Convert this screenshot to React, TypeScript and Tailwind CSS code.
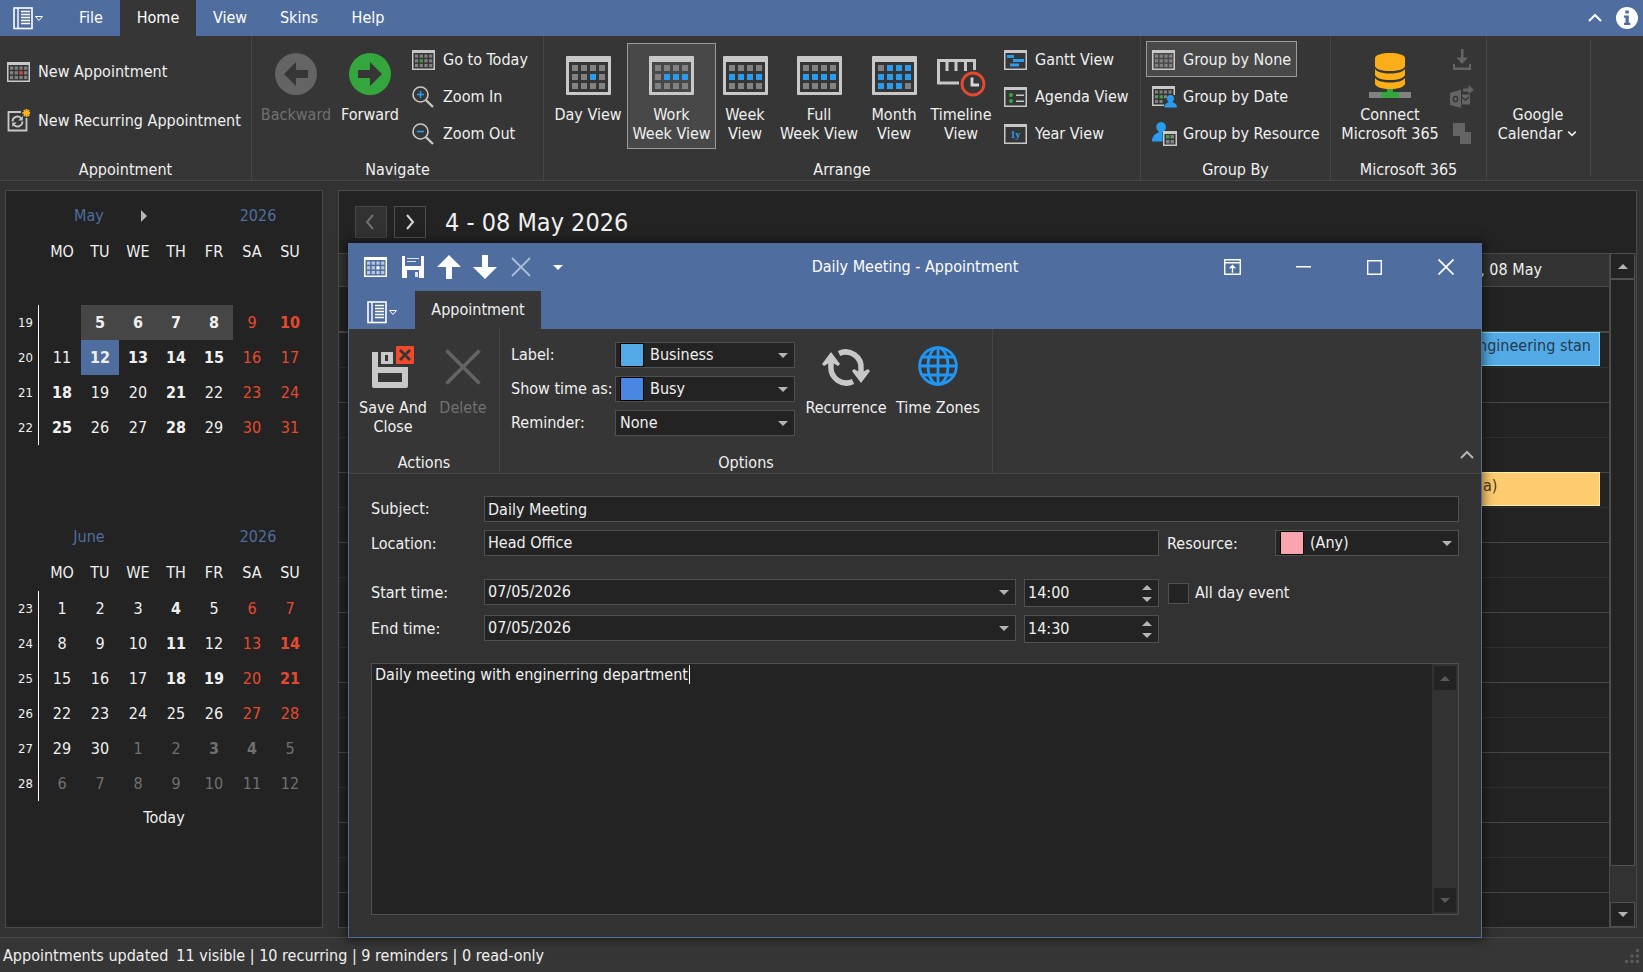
import type { ReactNode } from "react";
import clsx from "clsx";

/* ---------- icons ---------- */

type Cell = [number, number];

const WORK_WEEK: Cell[] = [[1, 1], [2, 1], [3, 1]];
const FULL_WEEK: Cell[] = [[0, 1], [1, 1], [2, 1], [3, 1]];
const MONTH: Cell[] = [
  [1, 0], [2, 0], [3, 0],
  [0, 1], [1, 1], [2, 1], [3, 1],
  [0, 2], [1, 2], [2, 2],
];

const CELLS: Cell[] = [0, 1, 2].flatMap((row) => [0, 1, 2, 3].map((col): Cell => [col, row]));

function isLit(lit: Cell[], [col, row]: Cell) {
  return lit.some(([c, r]) => c === col && r === row);
}

function BigCalendar({ lit }: { lit: Cell[] }) {
  return (
    <svg width="45" height="42" viewBox="0 -3 45 42">
      <path fill="#c8c8c8" fillRule="evenodd" d="M1 0h43a1 1 0 0 1 1 1v37a1 1 0 0 1-1 1H1a1 1 0 0 1-1-1V1a1 1 0 0 1 1-1zM3 6v30h39V6z" />
      {CELLS.map((cell) => (
        <rect
          key={cell.join()}
          x={6 + cell[0] * 9}
          y={9 + cell[1] * 9}
          width="6"
          height="6"
          fill={isLit(lit, cell) ? "#2a9cf0" : "#828282"}
        />
      ))}
    </svg>
  );
}

function SmallCalendar({ lit = [], color = "#c8c8c8", dot = "#828282", accent = "#33a33c" }: {
  lit?: Cell[];
  color?: string;
  dot?: string;
  accent?: string;
}) {
  return (
    <svg width="23" height="20" viewBox="0 0 23 20">
      <path fill={color} fillRule="evenodd" d="M0 0h23v20H0zM1.5 3v15.5h20V3z" />
      {CELLS.map((cell) => (
        <rect
          key={cell.join()}
          x={3 + cell[0] * 4.7}
          y={4.5 + cell[1] * 4.7}
          width="3.2"
          height="3.2"
          fill={isLit(lit, cell) ? accent : dot}
        />
      ))}
    </svg>
  );
}

function MenuIcon() {
  return (
    <svg width="31" height="23" viewBox="0 0 31 23" fill="none" stroke="#fff">
      <rect x="1" y="1" width="18" height="20.5" strokeWidth="1.6" />
      <path d="M5 1v20" strokeWidth="1.4" />
      <path d="M8 4.5h9M8 7.5h9M8 10.5h9M8 13.5h9M8 16.5h9" strokeWidth="1.5" />
      <path d="M22.5 9.5h7L26 13.5z" strokeWidth="1" />
    </svg>
  );
}

function RecurringIcon() {
  return (
    <svg width="23" height="23" viewBox="0 0 23 23" fill="none">
      <path d="M14 3H1.5v18.500h18V9" stroke="#c8c8c8" strokeWidth="1.8" />
      <path d="M5.500 12.500a5 5 0 0 1 8.500-3.500M15.500 12.500a5 5 0 0 1-8.500 3.500" stroke="#c8c8c8" strokeWidth="1.8" />
      <path d="M15.800 7v4.500h-4.500zM5.200 18v-4.500h4.500z" fill="#c8c8c8" />
      <path d="M19.500 0v8M15.500 4h8M16.700 1.200l5.600 5.600M22.300 1.200l-5.600 5.600" stroke="#fdb022" strokeWidth="1.8" />
    </svg>
  );
}

function CircleArrow({ back = false }: { back?: boolean }) {
  return (
    <svg width="42" height="42" viewBox="0 0 42 42">
      <circle cx="21" cy="21" r="21" fill={back ? "#646464" : "#35a63e"} />
      <path fill="#363636" d={back ? "M33 17H21V9L9 21l12 12v-8h12z" : "M9 17h12V9l12 12-12 12v-8H9z"} />
    </svg>
  );
}

function ZoomIcon({ plus = false }: { plus?: boolean }) {
  return (
    <svg width="22" height="22" viewBox="0 0 22 22" fill="none">
      <circle cx="8.500" cy="8.500" r="7.500" stroke="#c8c8c8" strokeWidth="1.6" />
      <path d="M13.800 14L21 21" stroke="#c8c8c8" strokeWidth="2.400" />
      <path d={plus ? "M5 8.500h7M8.500 5v7" : "M5 8.500h7"} stroke="#2a9cf0" strokeWidth="1.6" />
    </svg>
  );
}

function TimelineIcon() {
  return (
    <svg width="49" height="44" viewBox="0 -6 49 44" fill="none">
      <path d="M22 24H1.500V1.500h36V11M10 1.500V12M19 1.500V12M28.500 1.500V12" stroke="#c8c8c8" strokeWidth="3" />
      <ellipse cx="36" cy="25" rx="11" ry="11" fill="#363636" stroke="#e64a2e" strokeWidth="2.800" />
      <path d="M35 18.500V26h7" stroke="#d8d8d8" strokeWidth="2.800" />
    </svg>
  );
}

function GanttIcon() {
  return (
    <svg width="23" height="20" viewBox="0 0 23 20">
      <path fill="#c8c8c8" fillRule="evenodd" d="M0 0h23v20H0zM1.500 3v15.500h20V3z" />
      <path fill="#2a9cf0" d="M3 5h7v3H3zM9 9h11v3H9zM6 13.500h9v3H6z" />
    </svg>
  );
}

function AgendaIcon() {
  return (
    <svg width="23" height="20" viewBox="0 0 23 20">
      <path fill="#c8c8c8" fillRule="evenodd" d="M0 0h23v20H0zM1.500 3v15.500h20V3z" />
      <circle cx="7" cy="8" r="2" fill="#35a63e" />
      <circle cx="7" cy="14" r="2" fill="#35a63e" />
      <path fill="#c8c8c8" d="M12 7.500h8V9h-8zM12 13.500h8V15h-8z" />
    </svg>
  );
}

function YearIcon() {
  return (
    <svg width="23" height="20" viewBox="0 0 23 20">
      <path fill="#c8c8c8" fillRule="evenodd" d="M0 0h23v20H0zM1.500 3v15.500h20V3z" />
      <text x="11.500" y="14" textAnchor="middle" fontSize="10" fontWeight="bold" fontFamily="Liberation Serif, serif" fill="#2a9cf0">1y</text>
    </svg>
  );
}

function GroupDateIcon() {
  return (
    <svg width="25" height="22" viewBox="0 0 25 22">
      <path fill="#c8c8c8" d="M0 0h23v9h-1.500V3h-20v15.500H12V20H0z" />
      <path fill="#828282" d="M3 4.500h3v3H3zM7.500 4.500h3v3h-3zM12 4.500h3v3h-3zM16.500 4.500h3v3h-3zM3 9.200h3v3H3zM12 9.200h3v3h-3zM3 14h3v3H3zM7.500 14h3v3h-3z" />
      <path fill="#35a63e" d="M7.500 9.200h3.500v3.200H7.500z" />
      <path fill="#2a9cf0" d="M18.500 9a3.500 3.500 0 0 1 3.500 3.500c0 1.600-.8 3-1.700 3.800 2.300.6 4.700 1.700 4.700 5.200H12.500c0-3.500 2.200-4.600 4.300-5.200-.9-.8-1.800-2.200-1.800-3.800A3.500 3.500 0 0 1 18.500 9z" />
    </svg>
  );
}

function GroupResourceIcon() {
  return (
    <svg width="25" height="24" viewBox="0 0 25 24">
      <path fill="#2a9cf0" d="M9 0a5 5 0 0 1 5 5c0 1.700-.8 3.300-2 4.300V10h-1.500v9.500H0C0 14 3 12 6.500 10.500V9.300C5.300 8.300 4.300 6.700 4.300 5A4.800 4.800 0 0 1 9 0z" />
      <path fill="#c8c8c8" fillRule="evenodd" d="M11 9h14v15H11zM12.500 12v10.500h11V12z" />
      <path fill="#35a63e" d="M14 13h3.500v3.500H14z" />
      <path fill="#828282" d="M18.500 13H22v3.500h-3.500zM14 18h3.500v3.500H14zM18.500 18H22v3.500h-3.500z" />
    </svg>
  );
}

function DatabaseIcon() {
  return (
    <svg width="42" height="45" viewBox="0 0 42 45">
      <path fill="#828282" d="M0 39h12v6H0zM30 39h12v6H30z" />
      <path fill="#35a63e" d="M18 35h6v4h6v6H12v-6h6z" />
      <path fill="#fbae17" d="M6 5c0-3 7-5 15-5s15 2 15 5v8c0 3-7 5-15 5S6 16 6 13z" />
      <path fill="#fbae17" d="M6 16c2 3 8 4.500 15 4.500S34 19 36 16v6c-1 3-7 5-15 5S7 25 6 22z" />
      <path fill="#fbae17" d="M6 25c2 3 8 4.500 15 4.500S34 28 36 25v6c-1 3-7 5-15 5S7 34 6 31z" />
    </svg>
  );
}

function DownloadIcon() {
  return (
    <svg width="18" height="21" viewBox="0 0 18 21" fill="#646464">
      <path d="M8 0h2.500v8.500H15L9 15 3.500 8.500H8zM0 15h2v3.500h14V15h2v6H0z" />
    </svg>
  );
}

function OutlookIcon() {
  return (
    <svg width="24" height="23" viewBox="0 0 24 23">
      <path fill="#646464" d="M0 8l11-3.500V23L0 20zM12 9.500h8v10h-8z" />
      <path fill="none" stroke="#363636" strokeWidth="1.500" d="M11.500 12l4 3 3.500-3" />
      <ellipse cx="5.500" cy="14" rx="2.200" ry="2.600" fill="none" stroke="#363636" strokeWidth="1.500" />
      <path fill="#646464" d="M13 3.500h5.500V0L24 5l-5.500 4V6.500H13z" />
    </svg>
  );
}

function CopyIcon() {
  return (
    <svg width="18" height="21" viewBox="0 0 18 21" fill="#646464">
      <path d="M0 0h12v9h6v12H7v-8H0z" />
    </svg>
  );
}

function SaveCloseIcon() {
  return (
    <svg width="42" height="42" viewBox="0 0 42 42">
      <path fill="#c8c8c8" fillRule="evenodd" d="M0 6h6v15h30v19a2 2 0 0 1-2 2H2a2 2 0 0 1-2-2zM6 27v9h24v-9z" />
      <path fill="#c8c8c8" fillRule="evenodd" d="M9 6h12v12H9zM13 9v6h3V9z" />
      <rect x="24" width="18" height="18" rx="1" fill="#f0492b" />
      <path d="M28 4l10 10M38 4L28 14" stroke="#363636" strokeWidth="2.800" />
    </svg>
  );
}

function DeleteIcon() {
  return (
    <svg width="36" height="39" viewBox="0 -3 36 39">
      <path d="M1.500 1.500l33 33M34.500 1.500l-33 33" stroke="#646464" strokeWidth="3.600" />
    </svg>
  );
}

function RecurrenceIcon() {
  return (
    <svg width="48" height="40" viewBox="0 -3 48 40" fill="none">
      <path d="M9 11v6a15.500 15.500 0 0 0 22 15.500" stroke="#c8c8c8" strokeWidth="5.500" />
      <path d="M39 26v-6A15.500 15.500 0 0 0 17 4.500" stroke="#c8c8c8" strokeWidth="5.500" />
      <path d="M9 3l9 12-2 2-7-4-7 4-2-2zM39 34l9-12-2-2-7 4-7-4-2 2z" fill="#c8c8c8" />
    </svg>
  );
}

function GlobeIcon() {
  return (
    <svg width="40" height="40" viewBox="0 0 40 40" fill="none" stroke="#2196f3" strokeWidth="2.800">
      <circle cx="20" cy="20" r="18.400" />
      <ellipse cx="20" cy="20" rx="10" ry="18.400" />
      <path d="M20 1.500v37M1.500 20h37M4.500 11h31M4.500 29h31" />
    </svg>
  );
}

function FloppyIcon() {
  return (
    <svg width="22" height="22" viewBox="0 0 22 22">
      <path fill="#fff" fillRule="evenodd" d="M0 0h3v10h16V0h3v22H0zM5 14v8h12v-8z" />
      <path fill="#dfe7f4" d="M5 2h12v1H5zM5 5h9v1H5zM13 16h3v5h-3z" />
    </svg>
  );
}

function ArrowIcon({ down = false }: { down?: boolean }) {
  return (
    <svg width="24" height="24" viewBox="0 0 24 24" fill="#fff">
      <path d={down ? "M9 0h6v12h9L12 24 0 12h9z" : "M12 0l12 12h-9v12H9V12H0z"} />
    </svg>
  );
}

function Chevron({ dir, className }: { dir: "up" | "down" | "left" | "right"; className?: string }) {
  const d = {
    up: "M2 8l6-6 6 6",
    down: "M3 3l5 5 5-5",
    left: "M10 1L4 8l6 7",
    right: "M5 1l6 7-6 7",
  }[dir];
  const tall = dir === "left" || dir === "right";
  return (
    <svg width="16" height={tall ? 16 : 11} viewBox={tall ? "0 0 16 16" : "0 0 16 11"} fill="none" stroke="currentColor" strokeWidth="2" className={className}>
      <path d={d} />
    </svg>
  );
}

function Triangle({ up = false, className }: { up?: boolean; className?: string }) {
  return (
    <svg width="10" height="5" viewBox="0 0 10 5" fill="currentColor" className={clsx("shrink-0", className)}>
      <path d={up ? "M0 5h10L5 0z" : "M0 0h10L5 5z"} />
    </svg>
  );
}

/* ---------- ribbon ---------- */

function RibbonGroup({ title, className, children }: { title?: string; className?: string; children: ReactNode }) {
  return (
    <section className={clsx("flex shrink-0 flex-col border-r border-[#464646]", className)}>
      <div className="flex flex-1">{children}</div>
      <h2 className="h-[22px] text-center leading-6">{title}</h2>
    </section>
  );
}

function BigButton({ icon, lines, width, active, disabled }: {
  icon: ReactNode;
  lines: ReactNode[];
  width: string;
  active?: boolean;
  disabled?: boolean;
}) {
  return (
    <button
      disabled={disabled}
      className={clsx(
        "mt-[7px] flex h-[106px] shrink-0 flex-col items-center border pt-[9px] whitespace-nowrap",
        width,
        active ? "border-[#9a9a9a] bg-[#484848]" : "border-transparent",
        disabled && "text-[#707070]",
      )}
    >
      <span className="flex h-11 items-start justify-center">{icon}</span>
      <span className="mt-2 flex flex-col items-center leading-[19px]">
        {lines.map((line, i) => (
          <span key={i}>{line}</span>
        ))}
      </span>
    </button>
  );
}

function SmallButton({ icon, label, active }: { icon: ReactNode; label: string; active?: boolean }) {
  return (
    <button
      className={clsx(
        "flex h-9 items-center border px-[5px] pt-0.5 whitespace-nowrap",
        active ? "border-[#9a9a9a] bg-[#484848]" : "border-transparent",
      )}
    >
      <span className="flex w-[31px]">{icon}</span>
      {label}
    </button>
  );
}

function MainRibbon() {
  return (
    <div className="flex h-[145px] overflow-hidden border-b border-[#464646] bg-[#363636]">
      <RibbonGroup title="Appointment" className="w-[252px]">
        <div className="flex flex-col pt-[11px] pl-[7px]">
          <button className="flex h-[49px] items-center whitespace-nowrap">
            <span className="flex w-[31px]"><SmallCalendar lit={[[2, 1]]} accent="#e64a2e" /></span>
            New Appointment
          </button>
          <button className="flex h-[49px] items-center whitespace-nowrap">
            <span className="flex w-[31px]"><RecurringIcon /></span>
            New Recurring Appointment
          </button>
        </div>
      </RibbonGroup>

      <RibbonGroup title="Navigate" className="w-[292px]">
        <div className="flex pl-[6px]">
          <BigButton icon={<CircleArrow back />} lines={["Backward"]} width="w-[76px]" disabled />
          <BigButton icon={<CircleArrow />} lines={["Forward"]} width="w-[72px]" />
        </div>
        <div className="flex flex-col gap-px pt-[5px]">
          <SmallButton icon={<SmallCalendar lit={[[1, 1]]} />} label="Go to Today" />
          <SmallButton icon={<ZoomIcon plus />} label="Zoom In" />
          <SmallButton icon={<ZoomIcon />} label="Zoom Out" />
        </div>
      </RibbonGroup>

      <RibbonGroup title="Arrange" className="w-[597px]">
        <div className="flex pl-[5px]">
          <BigButton icon={<BigCalendar lit={[[2, 1]]} />} lines={["Day View"]} width="w-[78px]" />
          <BigButton icon={<BigCalendar lit={WORK_WEEK} />} lines={["Work", "Week View"]} width="w-[89px]" active />
          <BigButton icon={<BigCalendar lit={FULL_WEEK} />} lines={["Week", "View"]} width="w-[58px]" />
          <BigButton icon={<BigCalendar lit={FULL_WEEK} />} lines={["Full", "Week View"]} width="w-[90px]" />
          <BigButton icon={<BigCalendar lit={MONTH} />} lines={["Month", "View"]} width="w-[60px]" />
          <BigButton icon={<TimelineIcon />} lines={["Timeline", "View"]} width="w-[74px]" />
        </div>
        <div className="flex flex-col gap-px pt-[5px]">
          <SmallButton icon={<GanttIcon />} label="Gantt View" />
          <SmallButton icon={<AgendaIcon />} label="Agenda View" />
          <SmallButton icon={<YearIcon />} label="Year View" />
        </div>
      </RibbonGroup>

      <RibbonGroup title="Group By" className="w-[190px]">
        <div className="flex flex-col items-start gap-px pt-[5px] pl-[5px]">
          <SmallButton icon={<SmallCalendar />} label="Group by None" active />
          <SmallButton icon={<GroupDateIcon />} label="Group by Date" />
          <SmallButton icon={<GroupResourceIcon />} label="Group by Resource" />
        </div>
      </RibbonGroup>

      <RibbonGroup title="Microsoft 365" className="w-[156px]">
        <div className="pl-2">
          <BigButton icon={<DatabaseIcon />} lines={["Connect", "Microsoft 365"]} width="w-[102px]" />
        </div>
        <div className="flex flex-col gap-px pt-[5px] pl-[7px]">
          <button disabled aria-label="Import" className="flex h-9 w-7 items-center justify-center"><DownloadIcon /></button>
          <button disabled aria-label="Export to Outlook" className="flex h-9 w-7 items-center justify-center"><OutlookIcon /></button>
          <button disabled aria-label="Synchronise" className="flex h-9 w-7 items-center justify-center"><CopyIcon /></button>
        </div>
      </RibbonGroup>

      <RibbonGroup className="my-1 w-[104px]">
        <div className="-mt-1 pl-[7px]">
          <BigButton
            icon={null}
            lines={["Google", <span className="flex items-center gap-1">Calendar <Chevron dir="down" className="w-3" /></span>]}
            width="w-[88px]"
          />
        </div>
      </RibbonGroup>
    </div>
  );
}

/* ---------- date navigator ---------- */

interface Week {
  no: number;
  days: (number | null)[];
  bold?: number[];
  range?: boolean;
  // index of the first day that belongs to the next month
  nextFrom?: number;
}

const MAY: Week[] = [
  { no: 19, days: [null, 5, 6, 7, 8, 9, 10], bold: [5, 6, 7, 8, 10], range: true },
  { no: 20, days: [11, 12, 13, 14, 15, 16, 17], bold: [12, 13, 14, 15] },
  { no: 21, days: [18, 19, 20, 21, 22, 23, 24], bold: [18, 21] },
  { no: 22, days: [25, 26, 27, 28, 29, 30, 31], bold: [25, 28] },
];

const JUNE: Week[] = [
  { no: 23, days: [1, 2, 3, 4, 5, 6, 7], bold: [4] },
  { no: 24, days: [8, 9, 10, 11, 12, 13, 14], bold: [11, 14] },
  { no: 25, days: [15, 16, 17, 18, 19, 20, 21], bold: [18, 19, 21] },
  { no: 26, days: [22, 23, 24, 25, 26, 27, 28] },
  { no: 27, days: [29, 30, 1, 2, 3, 4, 5], bold: [3, 4], nextFrom: 2 },
  { no: 28, days: [6, 7, 8, 9, 10, 11, 12], nextFrom: 0 },
];

function MonthTable({ name, weeks, next, today }: { name: string; weeks: Week[]; next?: boolean; today?: number }) {
  return (
    <div className="h-[321px]">
      <div className="flex h-[49px] items-center pl-[43px] text-[#4f6d9e]">
        <button className="w-20 text-center">{name}</button>
        {next && (
          <button aria-label="Next month" className="ml-3 text-[#b4b4b4]">
            <svg width="6" height="12" viewBox="0 0 6 12" fill="currentColor"><path d="M0 0v12l6-6z" /></svg>
          </button>
        )}
        <button className="mr-[34px] ml-auto w-[60px] text-center">2026</button>
      </div>
      <table className="table-fixed border-collapse text-center">
        <thead>
          <tr className="h-[30px]">
            <th className="w-[37px] p-0" />
            {["MO", "TU", "WE", "TH", "FR", "SA", "SU"].map((day) => (
              <th key={day} className="w-[38px] p-0 pb-1.5 font-normal">{day}</th>
            ))}
          </tr>
        </thead>
        <tbody>
          {next && <tr className="h-[35px]"><td colSpan={8} /></tr>}
          {weeks.map((week) => (
            <tr key={week.no} className="h-[35px]">
              <th className="p-0 text-[13px] font-normal">
                <span className="block h-[35px] w-[33px] border-r border-white pr-[5px] text-right leading-[35px]">{week.no}</span>
              </th>
              {week.days.map((day, i) => {
                const isToday = day !== null && day === today;
                return (
                  <td
                    key={i}
                    className={clsx(
                      "p-0",
                      isToday && "bg-[#4f6d9e]",
                      week.range && i > 0 && i < 5 && "bg-[#464646]",
                      day !== null && week.bold?.includes(day) && "font-bold",
                      week.nextFrom !== undefined && i >= week.nextFrom ? "text-[#707070]" : i > 4 && "text-[#e64a2e]",
                    )}
                  >
                    {day}
                  </td>
                );
              })}
            </tr>
          ))}
        </tbody>
      </table>
    </div>
  );
}

function DateNavigator() {
  return (
    <aside className="w-[318px] shrink-0 border border-[#4a4a4a] bg-[#232323]">
      <MonthTable name="May" weeks={MAY} next today={12} />
      <MonthTable name="June" weeks={JUNE} />
      <div className="-mt-8 flex h-[34px] items-center justify-center">
        <button>Today</button>
      </div>
    </aside>
  );
}

/* ---------- scheduler ---------- */

function Scheduler() {
  return (
    <section className="flex min-w-0 flex-1 flex-col border border-[#4a4a4a] bg-[#232323]">
      <div className="flex h-[62px] items-center pl-4">
        <button disabled aria-label="Previous week" className="flex size-8 items-center justify-center border border-[#464646] bg-[#323232] text-[#707070]">
          <Chevron dir="left" />
        </button>
        <button aria-label="Next week" className="ml-[7px] flex size-8 items-center justify-center border border-[#505050] text-[#d8d8d8]">
          <Chevron dir="right" />
        </button>
        <h1 className="ml-[19px] pt-0.5 text-[25px]">4 - 08 May 2026</h1>
      </div>
      <div className="flex flex-1">
        <div className="flex min-w-0 flex-1 flex-col">
          <div className="flex h-[34px] items-center justify-end border-y border-[#4a4a4a] bg-[#323232] pr-[67px]">, 08 May</div>
          <div className="h-11 border-b-2 border-[#4a4a4a] box-content" />
          <div className="relative flex-1">
            {Array.from({ length: 16 }, (_, i) => (
              <div key={i} className={clsx("h-[35px] border-b", i % 2 ? "border-[#484848]" : "border-[#303030]")} />
            ))}
            <div className="absolute -top-px right-[9px] h-[34px] w-[232px] overflow-hidden border border-[#7fdcf5] bg-[#54aae6] pt-px pr-2 text-right whitespace-nowrap text-[#233a4c]">
              ngineering stan
            </div>
            <div className="absolute top-[139px] right-[9px] h-[34px] w-[232px] overflow-hidden border border-[#fff0a8] bg-[#fecb6e] pt-px pl-[114px] text-[#4c3a1a]">
              a)
            </div>
          </div>
        </div>
        <div className="flex w-[27px] flex-col border-l border-[#4a4a4a] bg-[#323232] pr-px">
          <button aria-label="Scroll up" className="flex h-[26px] items-center justify-center border border-[#505050] bg-[#232323] text-[#b4b4b4]"><Triangle up /></button>
          <div className="flex-1 border border-[#505050] bg-[#232323]" />
          <div className="h-9" />
          <button aria-label="Scroll down" className="flex h-[25px] items-center justify-center border border-[#505050] bg-[#232323] text-[#b4b4b4]"><Triangle /></button>
        </div>
      </div>
    </section>
  );
}

/* ---------- appointment dialog ---------- */

function Select({ id, value, swatch, className }: { id: string; value: string; swatch?: string; className?: string }) {
  return (
    <div className={clsx("flex h-[26px] shrink-0 items-center border border-[#505050] bg-[#232323] pr-[6px] pl-1", className)}>
      {swatch && <span className={clsx("mr-[6px] h-6 w-6 shrink-0 border border-black", swatch)} />}
      <select id={id} defaultValue={value} className="h-6 min-w-0 flex-1 appearance-none bg-transparent leading-6 outline-none">
        <option>{value}</option>
      </select>
      <Triangle className="pointer-events-none text-[#b4b4b4]" />
    </div>
  );
}

function DateBox({ id, value }: { id: string; value: string }) {
  return (
    <div className="flex h-[26px] min-w-0 flex-1 items-center border border-[#505050] bg-[#232323] pr-[6px] pl-[3px]">
      <input id={id} defaultValue={value} className="h-6 min-w-0 flex-1 bg-transparent outline-none" />
      <button type="button" aria-label="Open calendar"><Triangle className="text-[#b4b4b4]" /></button>
    </div>
  );
}

function TimeBox({ label, value }: { label: string; value: string }) {
  return (
    <div className="ml-2 flex h-7 w-[135px] shrink-0 items-center border border-[#505050] bg-[#232323] pr-[6px] pl-[3px]">
      <input aria-label={label} defaultValue={value} className="h-6 min-w-0 flex-1 bg-transparent outline-none" />
      <span className="flex flex-col gap-[7px] text-[#b4b4b4]">
        <button type="button" aria-label="Later"><Triangle up /></button>
        <button type="button" aria-label="Earlier"><Triangle /></button>
      </span>
    </div>
  );
}

function DialogTitleBar() {
  const control = "flex w-[71px] items-center justify-center";
  return (
    <header className="flex h-12 bg-[#4f6d9e]">
      <div className="flex w-[284px] items-center pl-[15px]">
        <SmallCalendar color="#fff" dot="#b9c8e0" accent="#fff" lit={[[2, 1]]} />
        <button aria-label="Save" className="ml-[15px]"><FloppyIcon /></button>
        <button aria-label="Previous" className="ml-[13px]"><ArrowIcon /></button>
        <button aria-label="Next" className="ml-3"><ArrowIcon down /></button>
        <button aria-label="Delete" className="ml-[14px]">
          <svg width="20" height="20" viewBox="0 0 20 20" stroke="#a9bbdb" strokeWidth="1.800"><path d="M1 1l18 18M19 1L1 19" /></svg>
        </button>
        <button aria-label="Customise toolbar" className="ml-[22px]"><Triangle className="text-white" /></button>
      </div>
      <h2 className="flex-1 text-center leading-[48px] whitespace-nowrap text-white">Daily Meeting - Appointment</h2>
      <div className="flex w-[284px]">
        <button aria-label="Ribbon display options" className={control}>
          <svg width="17" height="16" viewBox="0 0 16 15" fill="none" stroke="#fff" strokeWidth="1.300"><path d="M.7.7h14.600v13.600H.7zM.7 3.500h14.600M8 13V6M5.300 8.800L8 6l2.700 2.800" /></svg>
        </button>
        <button aria-label="Minimise" className={control}>
          <svg width="15" height="2" viewBox="0 0 15 2"><path fill="#fff" d="M0 0h15v1.500H0z" /></svg>
        </button>
        <button aria-label="Maximise" className={control}>
          <svg width="15" height="15" viewBox="0 0 15 15" fill="none" stroke="#fff" strokeWidth="1.400"><path d="M.7.7h13.600v13.600H.7z" /></svg>
        </button>
        <button aria-label="Close" className={control}>
          <svg width="16" height="16" viewBox="0 0 16 16" stroke="#fff" strokeWidth="1.700"><path d="M.5.5l15 15M15.500.5l-15 15" /></svg>
        </button>
      </div>
    </header>
  );
}

function DialogRibbon() {
  return (
    <div className="flex h-[145px] shrink-0 border-b border-[#464646] bg-[#363636]">
      <RibbonGroup title="Actions" className="w-[151px]">
        <div className="flex pl-[7px]">
          <BigButton icon={<SaveCloseIcon />} lines={["Save And", "Close"]} width="w-[74px]" />
          <BigButton icon={<DeleteIcon />} lines={["Delete"]} width="w-[66px]" disabled />
        </div>
      </RibbonGroup>
      <RibbonGroup title="Options" className="w-[493px]">
        <div className="flex flex-col gap-2 pt-[13px] pl-[11px]">
          <div className="flex items-center">
            <label htmlFor="label" className="w-[104px] whitespace-nowrap">Label:</label>
            <Select id="label" value="Business" swatch="bg-[#54aae6]" className="w-[180px]" />
          </div>
          <div className="flex items-center">
            <label htmlFor="show-as" className="w-[104px] whitespace-nowrap">Show time as:</label>
            <Select id="show-as" value="Busy" swatch="bg-[#4a87e2]" className="w-[180px]" />
          </div>
          <div className="flex items-center">
            <label htmlFor="reminder" className="w-[104px] whitespace-nowrap">Reminder:</label>
            <Select id="reminder" value="None" className="w-[180px]" />
          </div>
        </div>
        <div className="flex pl-[6px]">
          <BigButton icon={<RecurrenceIcon />} lines={["Recurrence"]} width="w-[90px]" />
          <BigButton icon={<GlobeIcon />} lines={["Time Zones"]} width="w-[94px]" />
        </div>
      </RibbonGroup>
      <button aria-label="Collapse ribbon" className="mr-[6px] mb-3 ml-auto self-end text-[#b4b4b4]"><Chevron dir="up" /></button>
    </div>
  );
}

function AppointmentDialog() {
  const input = "h-[26px] min-w-0 flex-1 border border-[#505050] bg-[#232323] px-[3px] outline-none";
  const label = "w-[113px] shrink-0";
  return (
    <div role="dialog" aria-label="Daily Meeting" className="absolute top-[243px] right-[161px] bottom-[34px] left-[348px] flex flex-col border border-t-0 border-[#4f6d9e] bg-[#323232] shadow-[0_0_10px_2px_rgba(0,0,0,0.5)]">
      <DialogTitleBar />
      <nav className="flex h-[38px] shrink-0 bg-[#4f6d9e]">
        <button aria-label="Application menu" className="w-[66px] pt-1 pl-[18px]"><MenuIcon /></button>
        <button className="w-[126px] bg-[#363636]">Appointment</button>
      </nav>
      <DialogRibbon />
      <form className="flex flex-1 flex-col p-[22px]">
        <div className="flex items-center">
          <label htmlFor="subject" className={label}>Subject:</label>
          <input id="subject" defaultValue="Daily Meeting" className={input} />
        </div>
        <div className="mt-2 flex h-[26px] leading-7">
          <label htmlFor="location" className={label}>Location:</label>
          <input id="location" defaultValue="Head Office" className={input} />
          <label htmlFor="resource" className="ml-2 w-[108px]">Resource:</label>
          <Select id="resource" value="(Any)" swatch="bg-[#f8a5b0]" className="w-[184px]" />
        </div>
        <div className="mt-[23px] flex items-start leading-7">
          <label htmlFor="start" className={label}>Start time:</label>
          <DateBox id="start" value="07/05/2026" />
          <TimeBox label="Start hour" value="14:00" />
          <label className="ml-[9px] flex h-7 w-[291px] items-center gap-[6px]">
            <input type="checkbox" className="size-[21px] appearance-none border border-[#505050] bg-[#232323]" />
            All day event
          </label>
        </div>
        <div className="mt-2 flex items-start leading-7">
          <label htmlFor="end" className={label}>End time:</label>
          <DateBox id="end" value="07/05/2026" />
          <TimeBox label="End hour" value="14:30" />
          <span className="w-[300px]" />
        </div>
        <div className="relative mt-5 flex flex-1 border border-[#505050] bg-[#232323]">
          <textarea
            aria-label="Description"
            defaultValue="Daily meeting with enginerring department"
            className="flex-1 resize-none bg-transparent pl-[3px] leading-[22px] outline-none"
          />
          {/* text cursor */}
          <span className="absolute top-px left-[317px] h-[19px] w-px bg-white" />
          <div className="flex w-[26px] flex-col justify-between bg-[#323232] p-[2px]">
            <button type="button" aria-label="Scroll up" className="flex h-6 items-center justify-center bg-[#232323] text-[#5a5a5a]"><Triangle up /></button>
            <button type="button" aria-label="Scroll down" className="flex h-6 items-center justify-center bg-[#232323] text-[#5a5a5a]"><Triangle /></button>
          </div>
        </div>
      </form>
    </div>
  );
}

/* ---------- shell ---------- */

export default function App() {
  return (
    <div className="relative flex min-h-screen flex-col overflow-hidden bg-[#323232] font-['DejaVu_Sans_Condensed','Noto_Sans',sans-serif] text-base text-[#f0f0f0]">
      <nav className="flex h-9 items-stretch bg-[#4f6d9e] text-white">
        <button aria-label="Application menu" className="flex w-[62px] items-center pl-[13px]"><MenuIcon /></button>
        <button className="w-[58px]">File</button>
        <button className="w-[76px] bg-[#363636]">Home</button>
        <button className="w-[68px]">View</button>
        <button className="w-[70px]">Skins</button>
        <button className="w-[68px]">Help</button>
        <button aria-label="Collapse ribbon" className="mr-[13px] ml-auto"><Chevron dir="up" /></button>
        <button aria-label="About" className="mr-[5px]">
          <svg width="22" height="22" viewBox="0 0 22 22">
            <circle cx="11" cy="11" r="11" fill="#fff" />
            <path fill="#4f6d9e" d="M9.300 3.500h3.500v3H9.300zM8 8.500h4.800v7.200h1.500V18H8v-2.300h1.500v-5H8z" />
          </svg>
        </button>
      </nav>
      <MainRibbon />
      <main className="flex flex-1 gap-[15px] pt-[9px] pr-[6px] pb-[9px] pl-[5px]">
        <DateNavigator />
        <Scheduler />
      </main>
      <footer className="flex h-[35px] items-center justify-between border-t border-[#464646] bg-[#363636] pt-0.5 pl-[3px]">
        <p>
          Appointments updated<span className="ml-2">11 visible | 10 recurring | 9 reminders | 0 read-only</span>
        </p>
        <svg width="14" height="14" viewBox="0 0 14 14" fill="#5a5a5a" className="mr-1">
          <path d="M11 0h3v3h-3zM11 5.500h3v3h-3zM5.500 5.500h3v3h-3zM11 11h3v3h-3zM5.500 11h3v3h-3zM0 11h3v3H0z" />
        </svg>
      </footer>
      <AppointmentDialog />
    </div>
  );
}
